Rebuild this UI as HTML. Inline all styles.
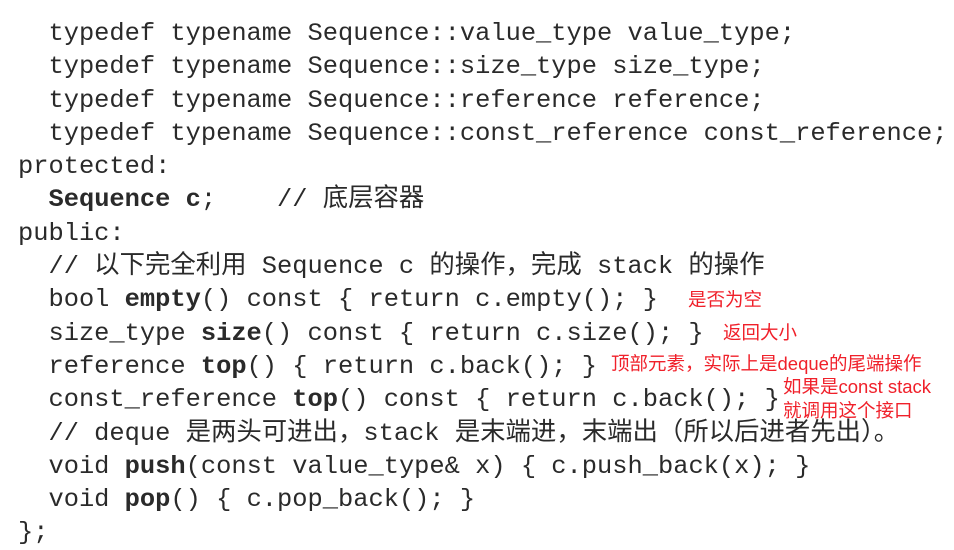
<!DOCTYPE html>
<html><head><meta charset="utf-8"><style>
body{margin:0;width:954px;height:548px;background:#fff;overflow:hidden;position:relative}
pre{position:absolute;left:18px;top:17px;margin:0;font-family:"Liberation Mono","Noto Sans CJK SC",monospace;font-size:25.4px;line-height:33.3px;color:#2a2a2a;letter-spacing:0}
b{font-weight:bold}
.r{position:absolute;color:#f0202a;font-family:"Liberation Sans","Noto Sans CJK SC",sans-serif;font-size:18.5px;line-height:22px;white-space:nowrap}
</style></head><body>
<pre>  typedef typename Sequence::value_type value_type;
  typedef typename Sequence::size_type size_type;
  typedef typename Sequence::reference reference;
  typedef typename Sequence::const_reference const_reference;
protected:
  <b>Sequence c</b>;    // 底层容器
public:
  // 以下完全利用 Sequence c 的操作，完成 stack 的操作
  bool <b>empty</b>() const { return c.empty(); }
  size_type <b>size</b>() const { return c.size(); }
  reference <b>top</b>() { return c.back(); }
  const_reference <b>top</b>() const { return c.back(); }
  // deque 是两头可进出，stack 是末端进，末端出（所以后进者先出）。
  void <b>push</b>(const value_type&amp; x) { c.push_back(x); }
  void <b>pop</b>() { c.pop_back(); }
};</pre>
<div class="r" style="left:688px;top:289px">是否为空</div>
<div class="r" style="left:723px;top:322px">返回大小</div>
<div class="r" style="left:611px;top:353px">顶部元素，实际上是deque的尾端操作</div>
<div class="r" style="left:783px;top:375px;line-height:24px">如果是const stack<br>就调用这个接口</div>
</body></html>
